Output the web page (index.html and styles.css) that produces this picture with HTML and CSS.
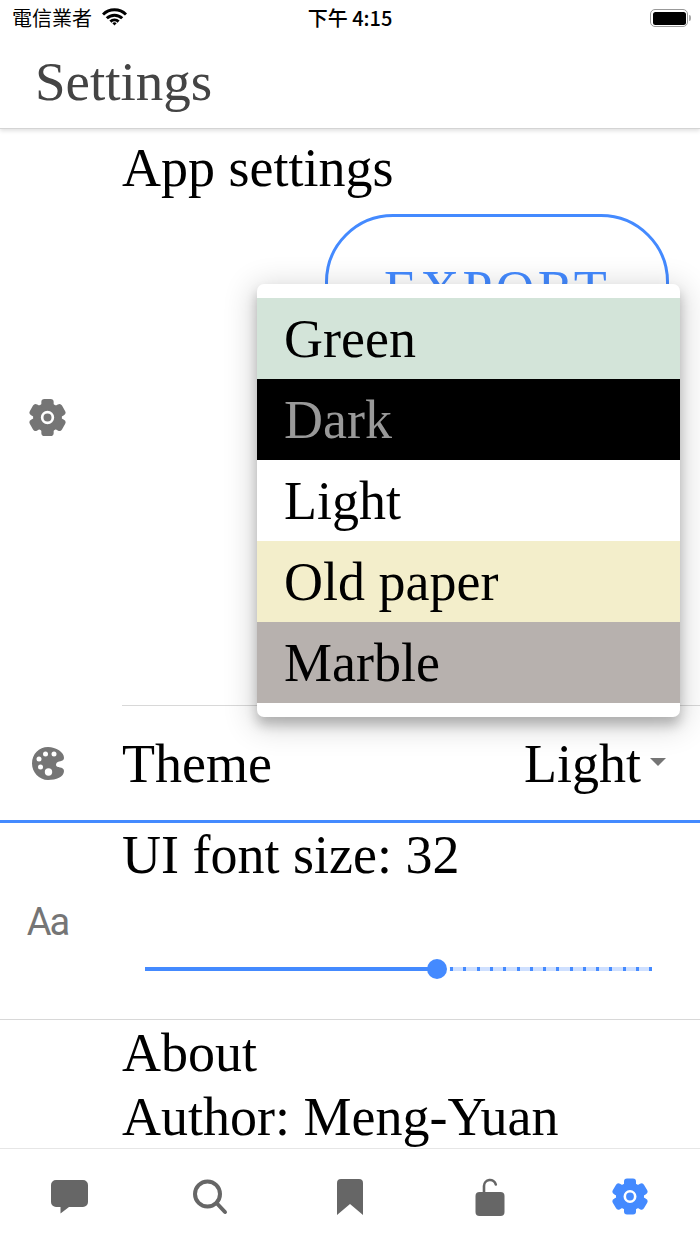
FILE: index.html
```html
<!DOCTYPE html>
<html lang="zh-Hant">
<head>
  <meta charset="UTF-8">
  <meta name="viewport" content="width=device-width, initial-scale=1.0">
  <title>Settings</title>
  <link rel="stylesheet" href="styles.css">
</head>
<body>
  <svg class="sprite" width="0" height="0">
    <symbol id="gear" viewBox="0 0 36 36">
      <g fill="currentColor">
        <circle cx="18" cy="18" r="14"/>
        <rect x="12" y="0" width="12" height="36" rx="3"/>
        <rect x="12" y="0" width="12" height="36" rx="3" transform="rotate(60 18 18)"/>
        <rect x="12" y="0" width="12" height="36" rx="3" transform="rotate(120 18 18)"/>
      </g>
      <circle cx="18" cy="18" r="5.2" fill="none" stroke="#fff" stroke-width="2.6"/>
    </symbol>
  </svg>

  <header class="top">
    <div class="status-bar">
      <div class="status-left">
        <span>電信業者</span>
        <svg class="wifi" width="25" height="18" viewBox="0 0 25 18">
          <path d="M1 6.5a16.5 16.5 0 0 1 23 0M4.8 10.3a11 11 0 0 1 15.4 0M8.4 13.7a6 6 0 0 1 8.2 0" fill="none" stroke="#000" stroke-width="3"/>
          <path d="M10.4 15.2a3.2 3.2 0 0 1 4.2 0l-2.1 2.4z" fill="#000"/>
        </svg>
      </div>
      <div class="status-time">下午 4:15</div>
      <div class="status-right">
        <div class="battery"><div class="battery-fill"></div></div>
        <div class="battery-nub"></div>
      </div>
    </div>
    <div class="toolbar">Settings</div>
  </header>

  <main class="content">
    <section class="row row-app">
      <div class="row-icon"><svg class="gear-icon" width="37" height="37"><use href="#gear"/></svg></div>
      <div class="row-body row-body-line">
        <div class="row-title">App settings</div>
        <div class="button-wrap"><button class="outline-btn">EXPORT</button></div>
      </div>
    </section>

    <section class="row row-theme">
      <div class="row-icon">
        <svg width="32" height="33" viewBox="0 0 32 33">
          <path d="M16 0C24 0 32 5 32 11C32 15.500 24 13 24 18C24 21.500 32 19 32 24C32 30 24 33 16 33C7 33 0 25 0 16.500C0 7 7 0 16 0Z" fill="#757575"/>
          <g fill="#fff">
            <circle cx="7" cy="12" r="2.500"/>
            <circle cx="13.500" cy="7" r="2.500"/>
            <circle cx="22" cy="7" r="2.500"/>
            <circle cx="8.500" cy="20" r="2.500"/>
            <circle cx="16.500" cy="25" r="3.700"/>
          </g>
        </svg>
      </div>
      <div class="row-body theme-body">
        <div class="row-title">Theme</div>
        <div class="select">
          <span>Light</span>
          <span class="select-arrow"></span>
        </div>
      </div>
    </section>

    <section class="row row-font">
      <div class="row-icon"><span class="aa-icon">Aa</span></div>
      <div class="row-body">
        <div class="row-title">UI font size: 32</div>
        <div class="slider">
          <div class="slider-done" style="width: 57.6%"><span class="slider-knob"></span></div>
        </div>
      </div>
    </section>

    <section class="row row-about">
      <div class="row-icon"></div>
      <div class="row-body">
        <div class="row-title">About</div>
        <div class="row-title">Author: Meng-Yuan</div>
      </div>
    </section>
  </main>

  <nav class="tabs">
    <div class="tab">
      <svg class="chat-icon" width="37" height="34" viewBox="0 0 37 34"><path d="M5 0H32A5 5 0 0 1 37 5V22A5 5 0 0 1 32 27H18L9.500 33.500V27H5A5 5 0 0 1 0 22V5A5 5 0 0 1 5 0Z" fill="#666"/></svg>
    </div>
    <div class="tab">
      <svg width="36" height="36" viewBox="0 0 36 36"><circle cx="15.500" cy="15" r="12.500" fill="none" stroke="#666" stroke-width="4"/><path d="M24.500 24L33 33" stroke="#666" stroke-width="4" stroke-linecap="round"/></svg>
    </div>
    <div class="tab">
      <svg width="26" height="36" viewBox="0 0 26 36"><path d="M4 0H22A4 4 0 0 1 26 4V36L13 25L0 36V4A4 4 0 0 1 4 0Z" fill="#666"/></svg>
    </div>
    <div class="tab">
      <svg width="30" height="38" viewBox="0 0 30 38"><rect x="0.500" y="14" width="29" height="24" rx="4" fill="#666"/><path d="M9 15V8A6 6 0 0 1 20.800 6.500" fill="none" stroke="#666" stroke-width="2.600" stroke-linecap="round"/></svg>
    </div>
    <div class="tab tab-active">
      <svg class="gear-icon" width="36" height="37"><use href="#gear"/></svg>
    </div>
  </nav>

  <div class="popover">
    <div class="option option-green">Green</div>
    <div class="option option-dark">Dark</div>
    <div class="option">Light</div>
    <div class="option option-paper">Old paper</div>
    <div class="option option-marble">Marble</div>
  </div>
</body>
</html>
```

FILE: styles.css
```css
html, body {
  margin: 0;
  padding: 0;
}
body {
  position: relative;
  width: 700px;
  height: 1244px;
  display: flex;
  flex-direction: column;
  overflow: hidden;
  background: #fff;
  color: #000;
  font-family: "Liberation Serif", serif;
  font-size: 54px;
}
.sprite {
  position: absolute;
}

/* top */
.top {
  position: relative;
  z-index: 1;
  height: 128px;
  border-bottom: 1px solid #d4d4d4;
  box-shadow: 0 2px 4px rgba(0, 0, 0, 0.12);
  background: #fff;
}
.status-bar {
  height: 36px;
  display: grid;
  grid-template-columns: 1fr auto 1fr;
  align-items: center;
  padding: 0 12px;
  font-family: "Noto Sans CJK TC", sans-serif;
  font-size: 20px;
  line-height: 36px;
}
.status-left {
  display: flex;
  align-items: center;
  gap: 10px;
}
.status-time {
  font-weight: 500;
}
.wifi {
  margin-top: -2px;
}
.status-right {
  display: flex;
  justify-content: flex-end;
  align-items: center;
  gap: 1px;
  margin-right: -3px;
}
.battery {
  width: 38px;
  height: 18px;
  box-sizing: border-box;
  border: 1.500px solid #999;
  border-radius: 5px;
  padding: 1.500px;
}
.battery-fill {
  height: 100%;
  background: #000;
  border-radius: 2.500px;
}
.battery-nub {
  width: 2px;
  height: 6px;
  background: #aaa;
  border-radius: 0 2px 2px 0;
}
.toolbar {
  height: 92px;
  line-height: 92px;
  padding-left: 35px;
  font-size: 55px;
  color: #444;
}

/* rows */
.content {
  flex: 1;
  overflow: hidden;
}
.row {
  display: flex;
}
.row-icon {
  width: 95px;
  flex: none;
  display: flex;
  justify-content: center;
  align-items: center;
  color: #757575;
}
.row-body {
  flex: 1;
  min-width: 0;
  margin-left: 27px;
}
.row-title {
  line-height: 64px;
}
.row-app {
  height: 577px;
}
.row-body-line {
  padding-top: 7px;
  border-bottom: 1px solid #d8d8d8;
}
.button-wrap {
  display: flex;
  justify-content: flex-end;
  padding: 14px 31px 0 0;
}
.outline-btn {
  width: 344px;
  height: 152px;
  box-sizing: border-box;
  border: 3px solid #448aff;
  border-radius: 68px;
  background: #fff;
  color: #448aff;
  font-family: inherit;
  font-size: 54px;
  letter-spacing: 3.200px;
}
.row-theme {
  height: 114px;
  border-bottom: 3px solid #448aff;
}
.theme-body {
  display: flex;
  justify-content: space-between;
  align-items: center;
  padding-top: 1px;
  padding-right: 34px;
}
.select {
  display: flex;
  align-items: center;
  gap: 9px;
}
.select-arrow {
  border-left: 8.500px solid transparent;
  border-right: 8.500px solid transparent;
  border-top: 8px solid #757575;
  margin-top: -4px;
}
.row-font {
  height: 196px;
  border-bottom: 1px solid #d8d8d8;
}
.slider {
  height: 4px;
  margin: 80px 48px 0 23px;
  background-color: #cfe0ff;
  background-image: repeating-linear-gradient(90deg, #448aff 0, #448aff 3px, transparent 3px, transparent 13.270px);
}
.slider-done {
  position: relative;
  height: 100%;
  background: #448aff;
}
.slider-knob {
  position: absolute;
  right: -10px;
  top: -8px;
  width: 20px;
  height: 20px;
  border-radius: 50%;
  background: #448aff;
  box-shadow: 3px 0 0 0 #fff;
}
.aa-icon {
  font-family: Roboto, sans-serif;
  font-size: 38px;
  letter-spacing: -2px;
  padding-top: 2px;
}
.row-about .row-body {
  padding-top: 1px;
}

/* tabs */
.tabs {
  height: 95px;
  flex: none;
  display: grid;
  grid-template-columns: repeat(5, 1fr);
  border-top: 1px solid #e6e6e6;
  background: #fff;
}
.tab {
  display: flex;
  justify-content: center;
  align-items: center;
  height: 94px;
  box-sizing: border-box;
  padding-top: 1px;
}
.chat-icon {
  margin-left: -1px;
}
.tab-active {
  color: #448aff;
}

/* theme dropdown */
.popover {
  position: absolute;
  z-index: 2;
  left: 257px;
  top: 284px;
  width: 423px;
  padding: 14px 0;
  background: #fff;
  border-radius: 7px;
  box-shadow: 0 8px 12px rgba(0, 0, 0, 0.22), 0 6px 30px 5px rgba(0, 0, 0, 0.16);
}
.option {
  height: 81px;
  line-height: 82px;
  padding-left: 27px;
}
.option-green {
  background: #d3e4d9;
}
.option-dark {
  background: #000;
  color: #999;
}
.option-paper {
  background: #f3eecb;
}
.option-marble {
  background: #b7b1ae;
}
```
